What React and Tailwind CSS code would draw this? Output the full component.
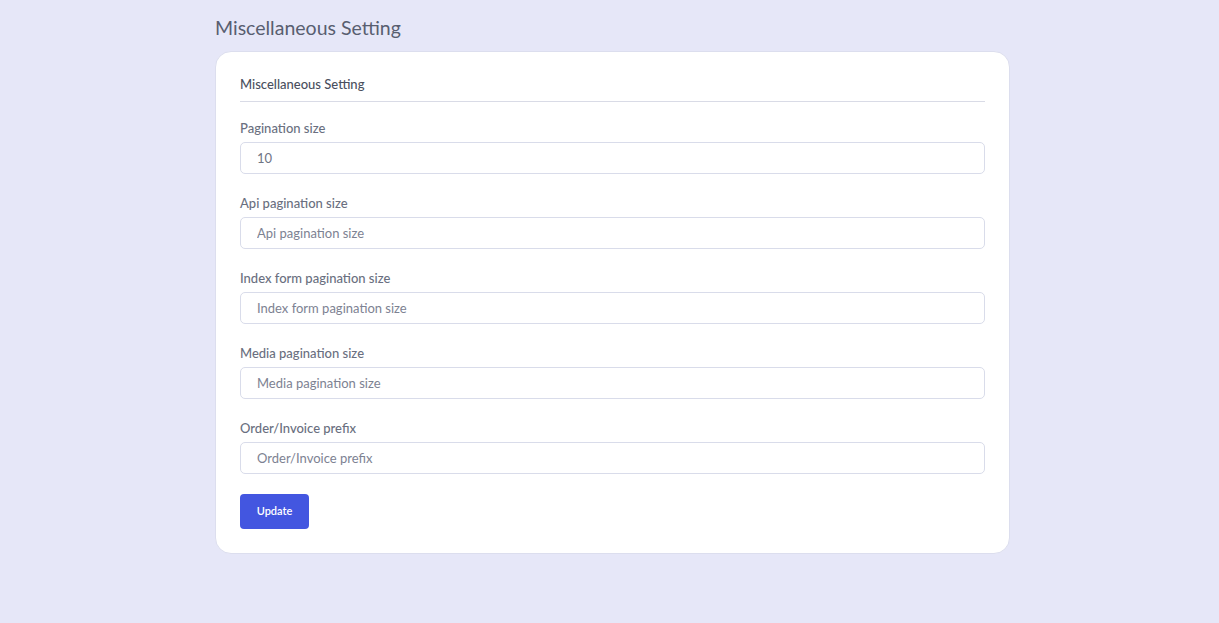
import React from "react";

const fields = [
  { label: "Pagination size", value: "10", placeholder: "" },
  { label: "Api pagination size", value: "", placeholder: "Api pagination size" },
  { label: "Index form pagination size", value: "", placeholder: "Index form pagination size" },
  { label: "Media pagination size", value: "", placeholder: "Media pagination size" },
  { label: "Order/Invoice prefix", value: "", placeholder: "Order/Invoice prefix" },
];

export default function App() {
  return (
    <div
      className="min-h-[623px] w-full bg-[#e6e7f8] pl-[215px]"
      style={{ fontFamily: "Lato, 'Open Sans', sans-serif" }}
    >
      <h1 className="pt-[14px] h-[42px] text-[19.5px] leading-[28px] text-[#585e70] font-normal">
        Miscellaneous Setting
      </h1>
      <div className="mt-[9px] w-[795px] bg-white border border-[#dcdeee] rounded-[16px] px-[24px] pt-[22px] pb-[24px]">
        <div className="pb-[7px] border-b border-[#d9dbe6] text-[13px] leading-[20px] font-medium text-[#4a4f5e]">
          Miscellaneous Setting
        </div>
        <div className="pt-[16px] flex flex-col gap-[19px]">
          {fields.map((f) => (
            <div key={f.label} className="flex flex-col">
              <label className="text-[13px] leading-[20px] font-medium text-[#6a6f80]">
                {f.label}
              </label>
              <input
                defaultValue={f.value}
                placeholder={f.placeholder}
                className="mt-[4px] h-[32px] w-full border border-[#d9dcea] rounded-[5px] px-[16px] text-[13px] text-[#6f7485] placeholder:text-[#7d8292] outline-none"
              />
            </div>
          ))}
          <div className="pt-[1px]">
            <button className="w-[69px] h-[35px] bg-[#4356e0] rounded-[4px] text-white text-[11px] font-semibold">
              Update
            </button>
          </div>
        </div>
      </div>
    </div>
  );
}
